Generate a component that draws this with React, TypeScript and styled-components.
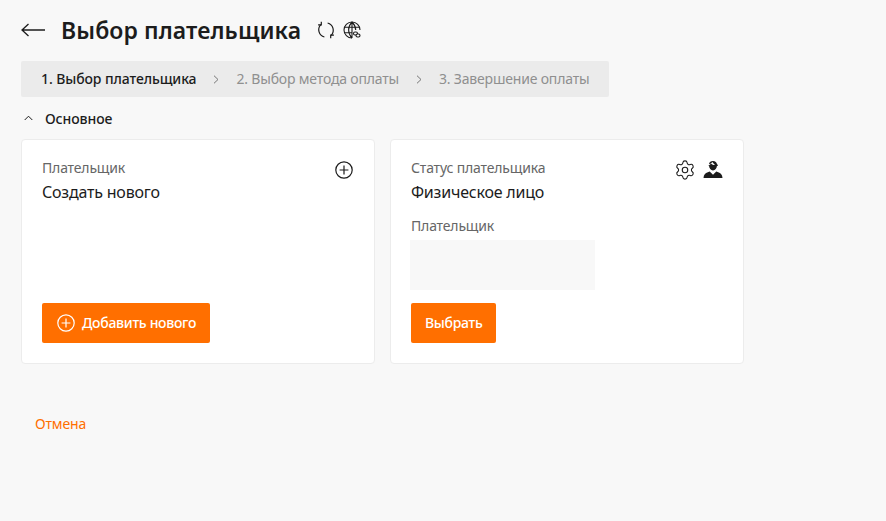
import React from "react";
import styled, { createGlobalStyle } from "styled-components";
import { Settings } from "lucide-react";

const Global = createGlobalStyle`
  html, body { margin: 0; padding: 0; background: #f8f8f8; }
  body { font-family: "Noto Sans", "Open Sans", "Liberation Sans", sans-serif; color: #1c1c1c; }
`;

const Page = styled.div`
  width: 886px;
  height: 521px;
  box-sizing: border-box;
  padding: 12px 0 0 21px;
  overflow: hidden;
`;
const Header = styled.header`
  display: flex;
  align-items: center;
  height: 36px;
`;
const BackIcon = styled.svg`
  width: 24px;
  height: 16px;
  margin-right: 16px;
  flex: none;
`;
const Title = styled.h1`
  margin: 0 16px 0 0;
  font-size: 23px;
  line-height: 36px;
  font-weight: 600;
  color: #1c1c1c;
  letter-spacing: 0.1px;
`;
const HeadIcons = styled.div`
  display: flex;
  align-items: center;
  gap: 8px;
`;
const Steps = styled.nav`
  display: flex;
  align-items: center;
  width: 588px;
  height: 36px;
  margin-top: 13px;
  padding-left: 20px;
  box-sizing: border-box;
  background: #ebebeb;
  border-radius: 2px;
`;
const Step = styled.span<{ $active?: boolean }>`
  font-size: 14px;
  line-height: 18px;
  font-weight: ${(p) => (p.$active ? 500 : 400)};
  color: ${(p) => (p.$active ? "#1c1c1c" : "#8f8f8f")};
  letter-spacing: ${(p) => (p.$active ? "-0.1px" : "-0.18px")};
  white-space: nowrap;
`;
const StepSep = styled.svg`
  width: 6px;
  height: 9px;
  margin: 0 17px 0 17px;
  flex: none;
`;
const Section = styled.div`
  display: flex;
  align-items: center;
  height: 20px;
  margin-top: 11px;
  font-size: 14px;
  font-weight: 500;
  letter-spacing: -0.1px;
  color: #1c1c1c;
`;
const Chevron = styled.svg`
  width: 9px;
  height: 6px;
  margin: 0 12px 0 3px;
`;
const Cards = styled.div`
  display: flex;
  gap: 15px;
  margin-top: 11px;
`;
const Card = styled.section`
  position: relative;
  width: 354px;
  height: 225px;
  box-sizing: border-box;
  padding: 19px 20px 20px 20px;
  background: #fff;
  border: 1px solid #ececec;
  border-radius: 4px;
  display: flex;
  flex-direction: column;
`;
const Label = styled.div`
  font-size: 14px;
  line-height: 17px;
  letter-spacing: -0.17px;
  color: #666;
`;
const Value = styled.div`
  font-size: 16px;
  line-height: 20px;
  margin-top: 6px;
  letter-spacing: -0.2px;
  color: #1c1c1c;
`;
const CardIcons = styled.div`
  position: absolute;
  top: 20px;
  right: 20px;
  height: 20px;
  display: flex;
  align-items: center;
  gap: 7px;
`;
const PlusSlot = styled.span`
  display: flex;
  margin-right: 1px;
`;
const Empty = styled.div`
  width: 185px;
  height: 50px;
  margin: 6px 0 0 -1px;
  background: #f8f8f8;
`;
const SubLabel = styled(Label)`
  margin-top: 15px;
`;
const Button = styled.button`
  margin-top: auto;
  align-self: flex-start;
  display: flex;
  align-items: center;
  gap: 7px;
  height: 40px;
  padding: 0 14px 1px 15px;
  border: 0;
  border-radius: 2px;
  background: #ff6f00;
  color: #fff;
  font-family: inherit;
  font-size: 14px;
  font-weight: 500;
  letter-spacing: -0.3px;
`;
const PlainButton = styled(Button)`
  padding: 0 14px 1px 14px;
`;
const Cancel = styled.a`
  display: block;
  margin: 50px 0 0 14px;
  font-size: 14px;
  line-height: 20px;
  letter-spacing: -0.15px;
  color: #ff6f00;
`;

const Plus = ({ size = 18, color = "#1c1c1c" }: { size?: number; color?: string }) => (
  <svg width={size} height={size} viewBox="0 0 18 18" fill="none" stroke={color} strokeWidth="1.2">
    <circle cx="9" cy="9" r="8.2" />
    <path d="M9 4.6v8.8M4.6 9h8.8" />
  </svg>
);

export default function App() {
  return (
    <Page>
      <Global />
      <Header>
        <BackIcon viewBox="0 0 24 16" fill="none" stroke="#1c1c1c" strokeWidth="1.3">
          <path d="M24 8H1M7.5 2 1 8l6.5 6" />
        </BackIcon>
        <Title>Выбор плательщика</Title>
        <HeadIcons>
          <svg width="18" height="18" viewBox="0 0 18 18" fill="none" stroke="#1c1c1c" strokeWidth="1.2">
            <path d="M7.400 16A7.500 7.500 0 0 1 3.800 3.600" />
            <path d="M10.600 2a7.500 7.500 0 0 1 3.600 12.400" />
            <path d="M4.300 .7v3.200H1.100M13.700 17.300v-3.200h3.200" />
          </svg>
          <svg width="18" height="18" viewBox="0 0 18 18" fill="none" stroke="#1c1c1c" strokeWidth="1.1">
            <path d="M9 17A8 8 0 1 1 17 9" />
            <path d="M9 1c-4.500 4.600-4.500 11.400 0 16M9 1c2.600 2.700 3.700 5.500 3.700 8M1.500 6.200h15M1.500 11.800h7.500M9 1v16" />
            <rect x="10.500" y="11" width="4" height="3" rx="1.500" fill="#fff" />
            <rect x="13" y="13" width="4" height="3" rx="1.500" fill="#fff" />
          </svg>
        </HeadIcons>
      </Header>
      <Steps>
        <Step $active>1. Выбор плательщика</Step>
        <StepSep viewBox="0 0 6 9" fill="none" stroke="#777" strokeWidth="1"><path d="m1 .7 4 3.800-4 3.800" /></StepSep>
        <Step>2. Выбор метода оплаты</Step>
        <StepSep viewBox="0 0 6 9" fill="none" stroke="#777" strokeWidth="1"><path d="m1 .7 4 3.800-4 3.800" /></StepSep>
        <Step>3. Завершение оплаты</Step>
      </Steps>
      <Section>
        <Chevron viewBox="0 0 9 6" fill="none" stroke="#1c1c1c" strokeWidth="1"><path d="m.7 5 3.800-3.800L8.300 5" /></Chevron>
        Основное
      </Section>
      <Cards>
        <Card>
          <Label>Плательщик</Label>
          <Value>Создать нового</Value>
          <CardIcons><PlusSlot><Plus /></PlusSlot></CardIcons>
          <Button><Plus size={18} color="#fff" />Добавить нового</Button>
        </Card>
        <Card>
          <Label>Статус плательщика</Label>
          <Value>Физическое лицо</Value>
          <CardIcons>
            <Settings size={22} strokeWidth={1.2} color="#1c1c1c" />
            <svg width="20" height="20" viewBox="0 0 20 20" fill="#1c1c1c">
              <path d="M10 1c2.300 0 3.800 1.300 4 3.200l1 .8v.8h-1c-.2 2.600-1.800 4.700-4 4.700S6.200 8.400 6 5.800L5 5.500c1.200-.3 2.200-.9 3-2.100 1.400 1.100 2.600 1.600 4 1.500-1-.8-2-1.700-2.500-2.900C8.500 3.200 7 4 6 4.200 6.300 2.200 7.800 1 10 1z" />
              <path d="M0.500 18c.2-3.300 1.700-5 4.300-5.700l1.900-.8 3.300 3.200 3.300-3.200 1.900.8c2.600.7 4.100 2.400 4.300 5.700z" />
            </svg>
          </CardIcons>
          <SubLabel>Плательщик</SubLabel>
          <Empty />
          <PlainButton>Выбрать</PlainButton>
        </Card>
      </Cards>
      <Cancel>Отмена</Cancel>
    </Page>
  );
}
